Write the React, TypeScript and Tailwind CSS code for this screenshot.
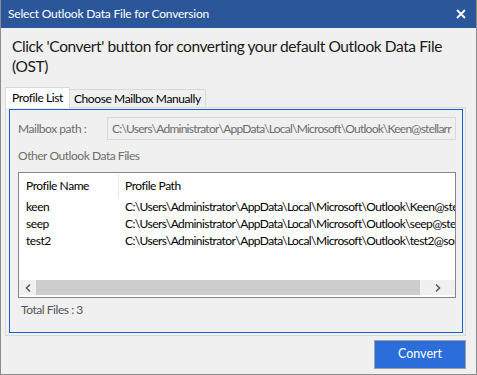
import React from "react";

const rows = [
  ["keen", "C:\\Users\\Administrator\\AppData\\Local\\Microsoft\\Outlook\\Keen@stellarmail.ost"],
  ["seep", "C:\\Users\\Administrator\\AppData\\Local\\Microsoft\\Outlook\\seep@stellarmail.ost"],
  ["test2", "C:\\Users\\Administrator\\AppData\\Local\\Microsoft\\Outlook\\test2@sol.ost"],
];

export default function App() {
  return (
    <div
      className="w-[477px] h-[375px] bg-[#f0f0f0] border-x border-b border-[#8c8c8c] flex flex-col overflow-hidden"
      style={{ fontFamily: 'Lato, "Noto Sans", sans-serif' }}
    >
      <div className="h-[28px] bg-[#2b579a] flex items-center justify-between pl-[7px] pr-[10px] shrink-0">
        <span className="text-white text-[12px] tracking-[-0.2px] leading-none">Select Outlook Data File for Conversion</span>
        <svg width="10" height="10" viewBox="0 0 10 10">
          <path d="M1 1 L9 9 M9 1 L1 9" stroke="white" strokeWidth="1.8" />
        </svg>
      </div>
      <div className="px-[11px] pt-[8px] text-[15.5px] tracking-[-0.4px] leading-[20px] text-[#1a1a1a]">
        Click 'Convert' button for converting your default Outlook Data File (OST)
      </div>
      <div className="flex items-end pl-[4px] mt-[11px] h-[20px] text-[12px] tracking-[-0.4px]">
        <div className="h-[21px] px-[6px] bg-white border border-b-0 border-[#d9d9d9] flex items-center text-black relative top-[1px] z-10">
          Profile List
        </div>
        <div className="h-[18px] px-[4px] bg-[#f0f0f0] border border-l-0 border-b-0 border-[#d9d9d9] flex items-center text-black">
          Choose Mailbox Manually
        </div>
      </div>
      <div className="ml-[4px] w-[461px] h-[229px] border border-[#d9d9d9] pt-[1px] pl-[3px] pr-[2px] pb-[2px]">
        <div className="w-full h-full border border-[#0f62cf] flex flex-col pl-[8px] pr-[6px] text-[12px] tracking-[-0.45px]">
          <div className="flex items-center mt-[7px] h-[23px]">
            <span className="w-[89px] text-[#6d6d6d]">Mailbox path :</span>
            <div className="flex-1 h-[23px] border border-[#d9d9d9] bg-[#f0f0f0] flex items-center pl-[4px] overflow-hidden whitespace-nowrap text-[#6d6d6d] tracking-[-0.75px]">
              C:\Users\Administrator\AppData\Local\Microsoft\Outlook\Keen@stellarr
            </div>
          </div>
          <div className="mt-[8px] text-[#6d6d6d] h-[16px] leading-[16px]">Other Outlook Data Files</div>
          <div className="mt-[8px] w-[438px] h-[126px] border border-[#828790] bg-white flex flex-col">
            <div className="flex h-[24px] items-center mt-[1px]">
              <div className="w-[100px] pl-[7px] h-full flex items-center border-r border-[#e5e5e5] text-black">Profile Name</div>
              <div className="pl-[6px] text-black">Profile Path</div>
            </div>
            <div className="flex-1 flex flex-col">
              {rows.map(([n, p]) => (
                <div key={n} className="flex h-[17px] items-center whitespace-nowrap">
                  <div className="w-[101px] pl-[7px] text-black">{n}</div>
                  <div className="flex-1 overflow-hidden pl-[5px] text-black tracking-[-0.58px]">{p}</div>
                </div>
              ))}
            </div>
            <div className="h-[15px] mb-[2px] flex items-center bg-[#f0f0f0]">
              <div className="w-[17px] flex items-center justify-center">
                <svg width="6" height="8" viewBox="0 0 6 8"><path d="M5 0.5 L1.5 4 L5 7.5" stroke="#606060" strokeWidth="1.6" fill="none" /></svg>
              </div>
              <div className="w-[384px] h-full bg-[#cdcdcd]" />
              <div className="flex-1 flex items-center justify-center">
                <svg width="6" height="8" viewBox="0 0 6 8"><path d="M1 0.5 L4.5 4 L1 7.5" stroke="#606060" strokeWidth="1.6" fill="none" /></svg>
              </div>
            </div>
          </div>
          <div className="mt-[4px] pl-[3px] text-[#555] h-[16px] leading-[16px]">Total Files : 3</div>
        </div>
      </div>
      <div className="flex justify-end pr-[10px] mt-[4px]">
        <div className="w-[92px] h-[29px] bg-[#2b6edb] border border-[#a0a0a0] flex items-center justify-center text-white text-[12.5px]">
          Convert
        </div>
      </div>
    </div>
  );
}
